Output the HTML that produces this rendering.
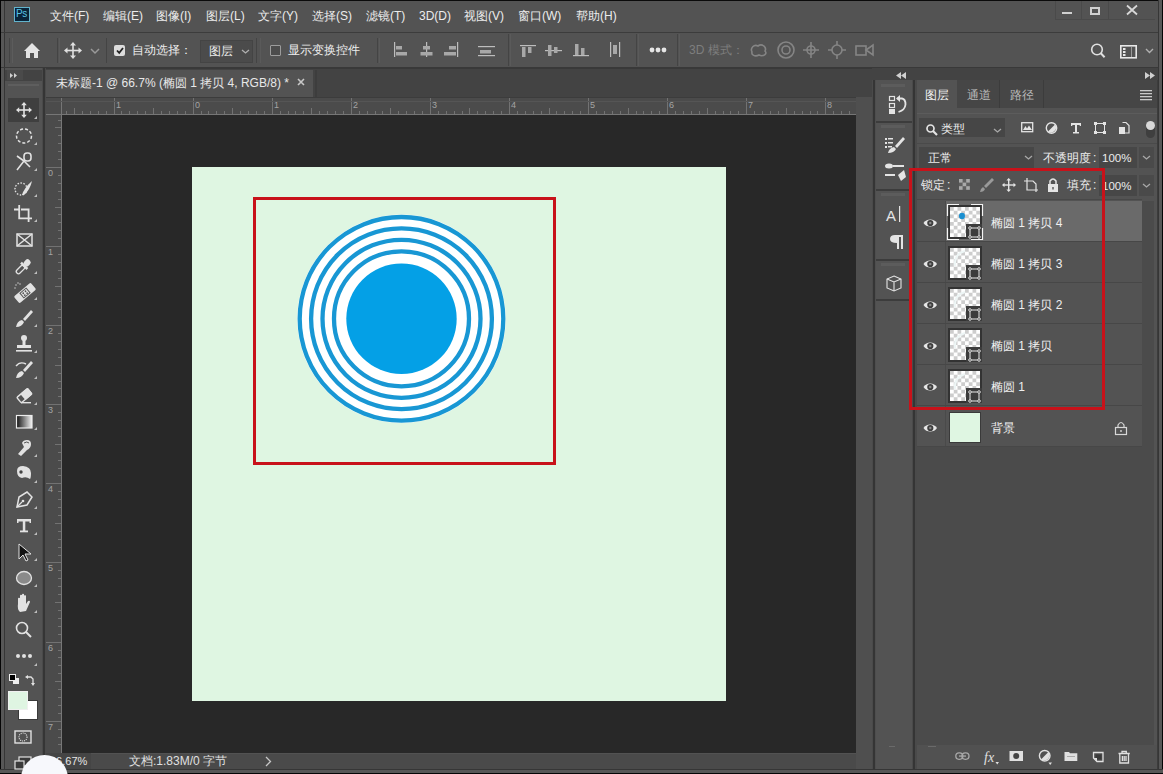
<!DOCTYPE html>
<html><head><meta charset="utf-8">
<style>
*{margin:0;padding:0;box-sizing:border-box}
html,body{width:1163px;height:774px;overflow:hidden;background:#535353;font-family:"Liberation Sans",sans-serif;color:#ececec}
.a{position:absolute}
.t{position:absolute;white-space:nowrap;font-size:12px;line-height:14px}
svg{position:absolute;overflow:visible}
.c{display:inline-block;width:1em;font-style:normal;text-align:center}
</style></head><body>
<!-- window frame -->
<div class="a" style="left:0;top:0;width:1163px;height:774px;background:#535353"></div>
<div class="a" style="left:0;top:0;width:1163px;height:1px;background:#0a0a0a"></div>
<div class="a" style="left:0;top:0;width:1px;height:774px;background:#050505"></div><div class="a" style="left:1px;top:1px;width:3px;height:67px;background:#575757"></div><div class="a" style="left:4px;top:1px;width:1px;height:67px;background:#363636"></div>
<div class="a" style="left:1158px;top:0;width:5px;height:774px;background:#575757;border-left:1px solid #363636;border-right:1px solid #050505"></div>
<div class="a" style="left:0;top:769px;width:1163px;height:5px;background:#575757;border-top:1px solid #363636;border-bottom:1px solid #050505"></div>

<!-- menu bar -->
<div class="a" style="left:14px;top:7px;width:16px;height:15px;background:#0a2439;border:1px solid #62b3cc"></div>
<div class="t" style="left:16px;top:8px;font-size:10px;line-height:12px;color:#58c4e6;letter-spacing:-0.5px">Ps</div>
<div class="t" style="left:50px;top:9px"><i class="c">文</i><i class="c">件</i>(F)</div>
<div class="t" style="left:103px;top:9px"><i class="c">编</i><i class="c">辑</i>(E)</div>
<div class="t" style="left:156px;top:9px"><i class="c">图</i><i class="c">像</i>(I)</div>
<div class="t" style="left:206px;top:9px"><i class="c">图</i><i class="c">层</i>(L)</div>
<div class="t" style="left:258px;top:9px"><i class="c">文</i><i class="c">字</i>(Y)</div>
<div class="t" style="left:312px;top:9px"><i class="c">选</i><i class="c">择</i>(S)</div>
<div class="t" style="left:366px;top:9px"><i class="c">滤</i><i class="c">镜</i>(T)</div>
<div class="t" style="left:419px;top:9px">3D(D)</div>
<div class="t" style="left:464px;top:9px"><i class="c">视</i><i class="c">图</i>(V)</div>
<div class="t" style="left:518px;top:9px"><i class="c">窗</i><i class="c">口</i>(W)</div>
<div class="t" style="left:576px;top:9px"><i class="c">帮</i><i class="c">助</i>(H)</div>
<!-- window controls -->
<div class="a" style="left:1055px;top:1px;width:1px;height:19px;background:#4a4a4a"></div>
<div class="a" style="left:1081px;top:1px;width:1px;height:19px;background:#4a4a4a"></div>
<div class="a" style="left:1108px;top:1px;width:1px;height:19px;background:#4a4a4a"></div>
<div class="a" style="left:1055px;top:19px;width:100px;height:1px;background:#4a4a4a"></div>
<div class="a" style="left:1062px;top:12px;width:10px;height:2px;background:#d0d0d0"></div>
<div class="a" style="left:1090px;top:7px;width:10px;height:8px;border:2px solid #d0d0d0"></div>
<svg style="left:1126px;top:5px" width="12" height="10"><path d="M1 0.5L11 9.5M11 0.5L1 9.5" stroke="#d8d8d8" stroke-width="1.8"/></svg>

<div class="a" style="left:1px;top:32px;width:1157px;height:1px;background:#3c3c3c"></div>

<!-- options bar -->
<div class="a" style="left:9px;top:38px;width:1px;height:25px;background:#444"></div>
<div class="a" style="left:12px;top:38px;width:1px;height:25px;background:#5c5c5c"></div>
<svg style="left:24px;top:43px" width="16" height="15"><path d="M8 0L16 8L14 8L14 15L10 15L10 10L6 10L6 15L2 15L2 8L0 8Z" fill="#e4e4e4"/></svg>
<div class="a sep" style="left:57px;top:38px;width:1px;height:25px;background:#444"></div>
<div class="a" style="left:59px;top:38px;width:1px;height:25px;background:#5a5a5a"></div>
<svg style="left:64px;top:42px" width="18" height="17"><g fill="#e0e0e0"><rect x="8.2" y="2" width="1.6" height="13"/><rect x="2" y="7.7" width="14" height="1.6"/><path d="M9 0L12 3.5L6 3.5Z"/><path d="M9 17L12 13.5L6 13.5Z"/><path d="M0 8.5L3.5 5.5L3.5 11.5Z"/><path d="M18 8.5L14.5 5.5L14.5 11.5Z"/></g></svg>
<svg style="left:90px;top:48px" width="10" height="6"><path d="M1 1L5 5L9 1" fill="none" stroke="#9a9a9a" stroke-width="1.5"/></svg>
<div class="a" style="left:106px;top:38px;width:1px;height:25px;background:#444"></div>
<div class="a" style="left:114px;top:45px;width:11px;height:11px;background:#dcdcdc;border-radius:2px"></div>
<svg style="left:116px;top:47px" width="8" height="7"><path d="M1 3.5L3.2 5.8L7 1" fill="none" stroke="#222" stroke-width="1.8"/></svg>
<div class="t" style="left:132px;top:43px"><i class="c">自</i><i class="c">动</i><i class="c">选</i><i class="c">择</i><i class="c">：</i></div>
<div class="a" style="left:200px;top:40px;width:53px;height:23px;background:#4b4b4b;border:1px solid #444"></div>
<div class="t" style="left:209px;top:44px"><i class="c">图</i><i class="c">层</i></div>
<svg style="left:241px;top:49px" width="9" height="5"><path d="M1 1L4.5 4L8 1" fill="none" stroke="#b0b0b0" stroke-width="1.3"/></svg>
<div class="a" style="left:256px;top:38px;width:1px;height:25px;background:#444"></div>
<div class="a" style="left:260px;top:38px;width:1px;height:25px;background:#5a5a5a"></div>
<div class="a" style="left:270px;top:45px;width:11px;height:11px;border:1px solid #9c9c9c;border-radius:1px;background:#4c4c4c"></div>
<div class="t" style="left:288px;top:43px"><i class="c">显</i><i class="c">示</i><i class="c">变</i><i class="c">换</i><i class="c">控</i><i class="c">件</i></div>
<div class="a" style="left:377px;top:38px;width:1px;height:25px;background:#444"></div>
<div class="a" style="left:379px;top:38px;width:1px;height:25px;background:#5a5a5a"></div>
<!-- align icons -->
<g></g>
<svg style="left:380px;top:34px" width="300" height="32"><g fill="#a8a8a8">
 <rect x="14" y="8" width="1.2" height="15" fill="#bdbdbd"/><rect x="16" y="12" width="6" height="3.5"/><rect x="16" y="18" width="11" height="3.5"/>
 <rect x="46" y="8" width="1.2" height="15" fill="#bdbdbd"/><rect x="43" y="12" width="7" height="3.5"/><rect x="40.5" y="18" width="12" height="3.5"/>
 <rect x="77" y="8" width="1.2" height="15" fill="#bdbdbd"/><rect x="69" y="12" width="7" height="3.5"/><rect x="64" y="18" width="12" height="3.5"/>
 <rect x="98" y="12" width="17" height="1.2" fill="#bdbdbd"/><rect x="100" y="16" width="11" height="3.5"/><rect x="98" y="21" width="17" height="1.2" fill="#bdbdbd"/>
 <rect x="128" y="0" width="1" height="32" fill="#444"/><rect x="130" y="0" width="1" height="32" fill="#5a5a5a"/>
 <rect x="140" y="11" width="16" height="1.2" fill="#bdbdbd"/><rect x="142" y="13" width="3.5" height="10"/><rect x="148" y="13" width="3.5" height="6"/>
 <rect x="165" y="16" width="17" height="1.2" fill="#bdbdbd"/><rect x="168" y="11" width="3.5" height="11"/><rect x="174" y="13" width="3.5" height="6"/>
 <rect x="193" y="21" width="16" height="1.2" fill="#bdbdbd"/><rect x="195" y="10" width="3.5" height="11"/><rect x="201" y="14" width="3.5" height="7"/>
 <rect x="230" y="8" width="1.2" height="15" fill="#bdbdbd"/><rect x="239" y="8" width="1.2" height="15" fill="#bdbdbd"/><rect x="233" y="11" width="4" height="9"/>
 <rect x="256" y="0" width="1" height="32" fill="#444"/><rect x="258" y="0" width="1" height="32" fill="#5a5a5a"/>
 <circle cx="272" cy="16" r="2.4" fill="#e6e6e6"/><circle cx="278" cy="16" r="2.4" fill="#e6e6e6"/><circle cx="284" cy="16" r="2.4" fill="#e6e6e6"/>
 <rect x="297" y="0" width="1" height="32" fill="#444"/><rect x="299" y="0" width="1" height="32" fill="#5a5a5a"/>
</g></svg>
<div class="t" style="left:689px;top:43px;color:#7e7e7e">3D <i class="c">模</i><i class="c">式</i><i class="c">：</i></div>
<svg style="left:748px;top:40px" width="130" height="20"><g fill="none" stroke="#858585" stroke-width="1.6">
 <path d="M4 12C2 8 6 4 10 6C14 3 19 7 17 11C20 14 15 17 11 15C7 17 3 15 4 12Z"/>
 <circle cx="38" cy="10" r="8"/><circle cx="38" cy="10" r="4"/>
 <path d="M63 2L63 18M55 10L71 10"/><circle cx="63" cy="10" r="4"/>
 <circle cx="89" cy="10" r="5"/><path d="M89 1L89 5M89 15L89 19M80 10L84 10M94 10L98 10"/>
 <rect x="108" y="6" width="10" height="9"/><path d="M118 10L125 5L125 15Z"/>
</g></svg>
<svg style="left:1090px;top:43px" width="16" height="16"><circle cx="7" cy="6.5" r="5.3" fill="none" stroke="#e0e0e0" stroke-width="1.6"/><path d="M10.8 10.3L14.6 14.2" stroke="#e0e0e0" stroke-width="2"/></svg>
<svg style="left:1120px;top:45px" width="17" height="14"><rect x="0.8" y="0.8" width="15.4" height="12" fill="none" stroke="#e8e8e8" stroke-width="1.6"/><g fill="#e8e8e8"><rect x="3" y="3" width="2.5" height="2"/><rect x="3" y="6" width="2.5" height="2"/><rect x="3" y="9" width="2.5" height="2"/></g><rect x="11" y="2" width="1" height="10" fill="#9a9a9a"/></svg>
<svg style="left:1145px;top:48px" width="9" height="6"><path d="M1 1L4.5 4.5L8 1" fill="none" stroke="#b0b0b0" stroke-width="1.4"/></svg>

<div class="a" style="left:1px;top:67px;width:1157px;height:2px;background:#393939"></div>

<!-- left dark column -->
<div class="a" style="left:1px;top:68px;width:3px;height:701px;background:#575757"></div><div class="a" style="left:4px;top:68px;width:1px;height:701px;background:#363636"></div><div class="a" style="left:5px;top:68px;width:1px;height:701px;background:#5a5a5a"></div>
<!-- tools panel -->
<div class="a" style="left:5px;top:68px;width:37px;height:701px;background:#535353"></div>
<div class="a" style="left:5px;top:70px;width:37px;height:11px;background:#434343"></div>
<div class="a" style="left:42px;top:68px;width:4px;height:701px;background:#4a4a4a"></div><div class="a" style="left:43px;top:68px;width:2px;height:701px;background:#353535"></div>

<svg style="left:0;top:0" width="50" height="774"><rect x="8" y="98" width="31" height="24" fill="#3f3f3f"/><g transform="translate(16,102)" fill="#e2e2e2"><rect x="7.2" y="2" width="1.6" height="12"/><rect x="2" y="7.2" width="12" height="1.6"/><path d="M8 0L10.8 3.2L5.2 3.2Z"/><path d="M8 16L10.8 12.8L5.2 12.8Z"/><path d="M0 8L3.2 5.2L3.2 10.8Z"/><path d="M16 8L12.8 5.2L12.8 10.8Z"/></g><path d="M37 116L37 119L34 119Z" fill="#bdbdbd"/><ellipse cx="24" cy="136" rx="7.5" ry="7" fill="none" stroke="#e2e2e2" stroke-width="1.5" stroke-dasharray="3 2"/><path d="M37 142L37 145L34 145Z" fill="#bdbdbd"/><g fill="none" stroke="#e2e2e2" stroke-width="1.6"><path d="M17 156L24 161L17 170"/><path d="M24 161L30 167"/><rect x="24" y="153" width="7" height="8" rx="3"/></g><path d="M37 168L37 171L34 171Z" fill="#bdbdbd"/><circle cx="21" cy="189" r="6" fill="none" stroke="#e2e2e2" stroke-width="1.4" stroke-dasharray="1.5 1.5"/><path d="M22 195Q24 188 32 181Q30 190 24 195Z" fill="#e2e2e2"/><path d="M37 194L37 197L34 197Z" fill="#bdbdbd"/><g fill="none" stroke="#e2e2e2" stroke-width="1.8"><path d="M14 209.5H19.5M19.2 205V218.3H32M21 209.5H28.6V222"/></g><path d="M37 219L37 222L34 222Z" fill="#bdbdbd"/><g fill="none" stroke="#e2e2e2" stroke-width="1.5"><rect x="17" y="234" width="15" height="12"/><path d="M17 234L32 246M32 234L17 246"/></g><g transform="rotate(-45 24 266)"><rect x="14" y="263.8" width="10" height="4.4" rx="2.2" fill="none" stroke="#e2e2e2" stroke-width="1.3"/><rect x="23" y="261.5" width="2.5" height="9" fill="#e2e2e2"/><rect x="25" y="263" width="7" height="6" rx="2.5" fill="#e2e2e2"/></g><path d="M37 271L37 274L34 274Z" fill="#bdbdbd"/><g transform="rotate(-40 25 293)"><rect x="14" y="288.5" width="22" height="9" rx="1.5" fill="#e2e2e2"/><rect x="20.5" y="289.5" width="9" height="7" fill="#535353"/><rect x="21.5" y="290.5" width="7" height="5" fill="#e2e2e2"/><g fill="#535353"><circle cx="23.5" cy="292" r="0.9"/><circle cx="26.5" cy="292" r="0.9"/><circle cx="23.5" cy="294.5" r="0.9"/><circle cx="26.5" cy="294.5" r="0.9"/></g></g><g fill="#d8d8d8"><circle cx="16" cy="285" r="0.7"/><circle cx="18" cy="283" r="0.7"/><circle cx="20" cy="284" r="0.7"/><circle cx="15" cy="288" r="0.7"/></g><path d="M37 297L37 300L34 300Z" fill="#bdbdbd"/><path d="M31 310L33 312L25 321L23 319Z" fill="#e2e2e2"/><path d="M22 320Q17 321 16 327Q22 327 24 322Z" fill="#e2e2e2"/><path d="M37 324L37 327L34 327Z" fill="#bdbdbd"/><g fill="#e2e2e2"><circle cx="24" cy="338" r="3"/><rect x="22.5" y="340" width="3" height="5"/><rect x="17" y="345" width="14" height="3"/><rect x="16" y="350" width="16" height="1.6"/></g><path d="M37 350L37 353L34 353Z" fill="#bdbdbd"/><path d="M31 361L33 363L25 372L23 370Z" fill="#e2e2e2"/><path d="M22 371Q17 372 16 378Q22 378 24 373Z" fill="#e2e2e2"/><path d="M16 366Q20 361 26 364" fill="none" stroke="#e2e2e2" stroke-width="1.4"/><path d="M37 376L37 379L34 379Z" fill="#bdbdbd"/><g transform="rotate(-40 24 396)"><rect x="17.5" y="392.5" width="14" height="7" rx="1" fill="none" stroke="#e2e2e2" stroke-width="1.4"/><rect x="22.5" y="392" width="9.5" height="8" rx="1" fill="#e2e2e2"/></g><rect x="21" y="402" width="10" height="1.4" fill="#e2e2e2"/><path d="M37 402L37 405L34 405Z" fill="#bdbdbd"/><defs><linearGradient id="gr" x1="0" y1="0" x2="1" y2="0"><stop offset="0" stop-color="#111"/><stop offset="1" stop-color="#f4f4f4"/></linearGradient></defs><rect x="16.5" y="415.5" width="15.5" height="12.5" fill="url(#gr)" stroke="#ececec" stroke-width="1.2"/><path d="M37 427L37 430L34 430Z" fill="#bdbdbd"/><path d="M18 454L24 447L22 443Q23 440 27 440Q31 440 31 444Q31 448 27 450L21 456Z" fill="#e2e2e2"/><path d="M24 443Q27 441 29 443" fill="none" stroke="#535353" stroke-width="1"/><path d="M37 454L37 457L34 457Z" fill="#bdbdbd"/><path d="M17 471Q17 466 23 466Q31 467 31 473Q31 478 30 479Q26 476 22 478Q17 477 17 471Z" fill="#e2e2e2"/><circle cx="21" cy="472" r="1.7" fill="#444"/><path d="M37 480L37 483L34 483Z" fill="#bdbdbd"/><path d="M17 507L19 497L27 492L32 497L27 505Z" fill="none" stroke="#e2e2e2" stroke-width="1.5"/><circle cx="23" cy="501" r="1.3" fill="#e2e2e2"/><path d="M17 507L22 502" stroke="#e2e2e2" stroke-width="1.2"/><path d="M37 506L37 509L34 509Z" fill="#bdbdbd"/><g fill="#e2e2e2"><rect x="17" y="519" width="14" height="2.5"/><rect x="22.8" y="519" width="2.5" height="13"/><rect x="20" y="530.5" width="8" height="1.8"/><rect x="17" y="519" width="1.5" height="4"/><rect x="29.5" y="519" width="1.5" height="4"/></g><path d="M37 532L37 535L34 535Z" fill="#bdbdbd"/><path d="M19 544L19 559L23 555L26 561L28 560L25 554L31 554Z" fill="#111" stroke="#e2e2e2" stroke-width="1"/><path d="M37 558L37 561L34 561Z" fill="#bdbdbd"/><ellipse cx="24" cy="578" rx="7.5" ry="6.5" fill="#8a8a8a" stroke="#e2e2e2" stroke-width="1.3"/><path d="M37 584L37 587L34 587Z" fill="#bdbdbd"/><path d="M18 604L18 599Q18 597 20 598L20 603L20 596Q20 594 22 595L22 602L22 595Q22 593 24 594L24 602L24 596Q25 594 26 596L26 604L28 601Q30 600 30 602L26 611L20 612Q17 609 18 604Z" fill="#e2e2e2"/><path d="M37 610L37 613L34 613Z" fill="#bdbdbd"/><circle cx="22" cy="628" r="5.5" fill="none" stroke="#e2e2e2" stroke-width="1.6"/><path d="M26 632L31 637" stroke="#e2e2e2" stroke-width="2"/><g fill="#e2e2e2"><circle cx="18" cy="656" r="2"/><circle cx="24" cy="656" r="2"/><circle cx="30" cy="656" r="2"/></g><path d="M37 663L37 666L34 666Z" fill="#bdbdbd"/><rect x="13" y="678" width="6" height="6" fill="#eee"/><rect x="9.5" y="674.5" width="6" height="6" fill="#000" stroke="#eee" stroke-width="1"/><path d="M27 677L31 677L33 679L33 684" fill="none" stroke="#e2e2e2" stroke-width="1.3"/><path d="M25 677L28 675L28 679Z" fill="#e2e2e2"/><path d="M33 686L31 683L35 683Z" fill="#e2e2e2"/><rect x="18.5" y="700.5" width="19" height="19" fill="#ffffff" stroke="#3a3a3a" stroke-width="1"/><rect x="8.5" y="691.5" width="19" height="18" fill="#dff5e2" stroke="#f0f0f0" stroke-width="1"/><rect x="15" y="731" width="16" height="12" fill="none" stroke="#e2e2e2" stroke-width="1.4"/><circle cx="23" cy="737" r="4" fill="none" stroke="#e2e2e2" stroke-width="1.2" stroke-dasharray="1 1"/><rect x="19" y="757" width="12" height="9" fill="#3a3a3a" stroke="#e2e2e2" stroke-width="1.2"/><rect x="15" y="761" width="9" height="8" fill="#3a3a3a" stroke="#e2e2e2" stroke-width="1.2"/></svg>
<div class="a" style="left:7px;top:70px;width:16px;height:10px;background:#4a4a4a"></div>
<svg style="left:9px;top:72px" width="10" height="7"><path d="M1 1L4 3.5L1 6ZM5 1L8 3.5L5 6Z" fill="#d0d0d0"/></svg>
<div class="a" style="left:8px;top:84px;width:31px;height:2px;background:#5e5e5e"></div>
<!-- tab bar -->
<div class="a" style="left:46px;top:69px;width:826px;height:28px;background:#434343"></div>
<div class="a" style="left:46px;top:70px;width:267px;height:27px;background:#535353"></div>
<div class="a" style="left:315px;top:70px;width:2px;height:27px;background:#3d3d3d"></div>

<!-- rulers -->
<div class="a" style="left:46px;top:97px;width:810px;height:18px;background:#4b4b4b"></div>
<div class="a" style="left:46px;top:97px;width:16px;height:656px;background:#4b4b4b"></div>
<div class="a" style="left:46px;top:97px;width:826px;height:1px;background:#3c3c3c"></div>

<div class="t" style="left:56px;top:76px;color:#e8e8e8"><i class="c">未</i><i class="c">标</i><i class="c">题</i>-1 @ 66.7% (<i class="c">椭</i><i class="c">圆</i> 1 <i class="c">拷</i><i class="c">贝</i> 4, RGB/8) *</div>
<svg style="left:297px;top:78px" width="8" height="8"><path d="M1 1L7 7M7 1L1 7" stroke="#c8c8c8" stroke-width="1.6"/></svg>
<svg style="left:0;top:0" width="1163" height="774"><g fill="#727272"><rect x="66" y="111" width="1" height="3"/><rect x="74" y="108" width="1" height="6"/><rect x="82" y="111" width="1" height="3"/><rect x="90" y="111" width="1" height="3"/><rect x="98" y="111" width="1" height="3"/><rect x="106" y="111" width="1" height="3"/><rect x="114" y="98" width="1" height="16"/><rect x="121" y="111" width="1" height="3"/><rect x="129" y="111" width="1" height="3"/><rect x="137" y="111" width="1" height="3"/><rect x="145" y="111" width="1" height="3"/><rect x="153" y="108" width="1" height="6"/><rect x="161" y="111" width="1" height="3"/><rect x="169" y="111" width="1" height="3"/><rect x="177" y="111" width="1" height="3"/><rect x="185" y="111" width="1" height="3"/><rect x="193" y="98" width="1" height="16"/><rect x="201" y="111" width="1" height="3"/><rect x="208" y="111" width="1" height="3"/><rect x="216" y="111" width="1" height="3"/><rect x="224" y="111" width="1" height="3"/><rect x="232" y="108" width="1" height="6"/><rect x="240" y="111" width="1" height="3"/><rect x="248" y="111" width="1" height="3"/><rect x="256" y="111" width="1" height="3"/><rect x="264" y="111" width="1" height="3"/><rect x="272" y="98" width="1" height="16"/><rect x="280" y="111" width="1" height="3"/><rect x="288" y="111" width="1" height="3"/><rect x="295" y="111" width="1" height="3"/><rect x="303" y="111" width="1" height="3"/><rect x="311" y="108" width="1" height="6"/><rect x="319" y="111" width="1" height="3"/><rect x="327" y="111" width="1" height="3"/><rect x="335" y="111" width="1" height="3"/><rect x="343" y="111" width="1" height="3"/><rect x="351" y="98" width="1" height="16"/><rect x="359" y="111" width="1" height="3"/><rect x="367" y="111" width="1" height="3"/><rect x="375" y="111" width="1" height="3"/><rect x="382" y="111" width="1" height="3"/><rect x="390" y="108" width="1" height="6"/><rect x="398" y="111" width="1" height="3"/><rect x="406" y="111" width="1" height="3"/><rect x="414" y="111" width="1" height="3"/><rect x="422" y="111" width="1" height="3"/><rect x="430" y="98" width="1" height="16"/><rect x="438" y="111" width="1" height="3"/><rect x="446" y="111" width="1" height="3"/><rect x="454" y="111" width="1" height="3"/><rect x="462" y="111" width="1" height="3"/><rect x="469" y="108" width="1" height="6"/><rect x="477" y="111" width="1" height="3"/><rect x="485" y="111" width="1" height="3"/><rect x="493" y="111" width="1" height="3"/><rect x="501" y="111" width="1" height="3"/><rect x="509" y="98" width="1" height="16"/><rect x="517" y="111" width="1" height="3"/><rect x="525" y="111" width="1" height="3"/><rect x="533" y="111" width="1" height="3"/><rect x="541" y="111" width="1" height="3"/><rect x="549" y="108" width="1" height="6"/><rect x="556" y="111" width="1" height="3"/><rect x="564" y="111" width="1" height="3"/><rect x="572" y="111" width="1" height="3"/><rect x="580" y="111" width="1" height="3"/><rect x="588" y="98" width="1" height="16"/><rect x="596" y="111" width="1" height="3"/><rect x="604" y="111" width="1" height="3"/><rect x="612" y="111" width="1" height="3"/><rect x="620" y="111" width="1" height="3"/><rect x="628" y="108" width="1" height="6"/><rect x="636" y="111" width="1" height="3"/><rect x="643" y="111" width="1" height="3"/><rect x="651" y="111" width="1" height="3"/><rect x="659" y="111" width="1" height="3"/><rect x="667" y="98" width="1" height="16"/><rect x="675" y="111" width="1" height="3"/><rect x="683" y="111" width="1" height="3"/><rect x="691" y="111" width="1" height="3"/><rect x="699" y="111" width="1" height="3"/><rect x="707" y="108" width="1" height="6"/><rect x="715" y="111" width="1" height="3"/><rect x="723" y="111" width="1" height="3"/><rect x="730" y="111" width="1" height="3"/><rect x="738" y="111" width="1" height="3"/><rect x="746" y="98" width="1" height="16"/><rect x="754" y="111" width="1" height="3"/><rect x="762" y="111" width="1" height="3"/><rect x="770" y="111" width="1" height="3"/><rect x="778" y="111" width="1" height="3"/><rect x="786" y="108" width="1" height="6"/><rect x="794" y="111" width="1" height="3"/><rect x="802" y="111" width="1" height="3"/><rect x="810" y="111" width="1" height="3"/><rect x="817" y="111" width="1" height="3"/><rect x="825" y="98" width="1" height="16"/><rect x="833" y="111" width="1" height="3"/><rect x="841" y="111" width="1" height="3"/><rect x="849" y="111" width="1" height="3"/><rect x="58" y="120" width="3" height="1"/><rect x="55" y="127" width="6" height="1"/><rect x="58" y="135" width="3" height="1"/><rect x="58" y="143" width="3" height="1"/><rect x="58" y="151" width="3" height="1"/><rect x="58" y="159" width="3" height="1"/><rect x="46" y="167" width="15" height="1"/><rect x="58" y="175" width="3" height="1"/><rect x="58" y="183" width="3" height="1"/><rect x="58" y="191" width="3" height="1"/><rect x="58" y="199" width="3" height="1"/><rect x="55" y="207" width="6" height="1"/><rect x="58" y="214" width="3" height="1"/><rect x="58" y="222" width="3" height="1"/><rect x="58" y="230" width="3" height="1"/><rect x="58" y="238" width="3" height="1"/><rect x="46" y="246" width="15" height="1"/><rect x="58" y="254" width="3" height="1"/><rect x="58" y="262" width="3" height="1"/><rect x="58" y="270" width="3" height="1"/><rect x="58" y="278" width="3" height="1"/><rect x="55" y="286" width="6" height="1"/><rect x="58" y="294" width="3" height="1"/><rect x="58" y="301" width="3" height="1"/><rect x="58" y="309" width="3" height="1"/><rect x="58" y="317" width="3" height="1"/><rect x="46" y="325" width="15" height="1"/><rect x="58" y="333" width="3" height="1"/><rect x="58" y="341" width="3" height="1"/><rect x="58" y="349" width="3" height="1"/><rect x="58" y="357" width="3" height="1"/><rect x="55" y="365" width="6" height="1"/><rect x="58" y="373" width="3" height="1"/><rect x="58" y="381" width="3" height="1"/><rect x="58" y="388" width="3" height="1"/><rect x="58" y="396" width="3" height="1"/><rect x="46" y="404" width="15" height="1"/><rect x="58" y="412" width="3" height="1"/><rect x="58" y="420" width="3" height="1"/><rect x="58" y="428" width="3" height="1"/><rect x="58" y="436" width="3" height="1"/><rect x="55" y="444" width="6" height="1"/><rect x="58" y="452" width="3" height="1"/><rect x="58" y="460" width="3" height="1"/><rect x="58" y="468" width="3" height="1"/><rect x="58" y="475" width="3" height="1"/><rect x="46" y="483" width="15" height="1"/><rect x="58" y="491" width="3" height="1"/><rect x="58" y="499" width="3" height="1"/><rect x="58" y="507" width="3" height="1"/><rect x="58" y="515" width="3" height="1"/><rect x="55" y="523" width="6" height="1"/><rect x="58" y="531" width="3" height="1"/><rect x="58" y="539" width="3" height="1"/><rect x="58" y="547" width="3" height="1"/><rect x="58" y="555" width="3" height="1"/><rect x="46" y="562" width="15" height="1"/><rect x="58" y="570" width="3" height="1"/><rect x="58" y="578" width="3" height="1"/><rect x="58" y="586" width="3" height="1"/><rect x="58" y="594" width="3" height="1"/><rect x="55" y="602" width="6" height="1"/><rect x="58" y="610" width="3" height="1"/><rect x="58" y="618" width="3" height="1"/><rect x="58" y="626" width="3" height="1"/><rect x="58" y="634" width="3" height="1"/><rect x="46" y="642" width="15" height="1"/><rect x="58" y="650" width="3" height="1"/><rect x="58" y="657" width="3" height="1"/><rect x="58" y="665" width="3" height="1"/><rect x="58" y="673" width="3" height="1"/><rect x="55" y="681" width="6" height="1"/><rect x="58" y="689" width="3" height="1"/><rect x="58" y="697" width="3" height="1"/><rect x="58" y="705" width="3" height="1"/><rect x="58" y="713" width="3" height="1"/><rect x="46" y="721" width="15" height="1"/><rect x="58" y="729" width="3" height="1"/><rect x="58" y="737" width="3" height="1"/><rect x="58" y="744" width="3" height="1"/><rect x="46" y="114" width="810" height="1" fill="#767676"/><rect x="61" y="98" width="1" height="655" fill="#767676"/><rect x="46" y="101" width="810" height="1" fill="#555"/></g></svg>
<div class="t" style="left:116px;top:100px;font-size:9px;line-height:11px;color:#a4a4a4">1</div>
<div class="t" style="left:195px;top:100px;font-size:9px;line-height:11px;color:#a4a4a4">0</div>
<div class="t" style="left:274px;top:100px;font-size:9px;line-height:11px;color:#a4a4a4">1</div>
<div class="t" style="left:353px;top:100px;font-size:9px;line-height:11px;color:#a4a4a4">2</div>
<div class="t" style="left:432px;top:100px;font-size:9px;line-height:11px;color:#a4a4a4">3</div>
<div class="t" style="left:511px;top:100px;font-size:9px;line-height:11px;color:#a4a4a4">4</div>
<div class="t" style="left:590px;top:100px;font-size:9px;line-height:11px;color:#a4a4a4">5</div>
<div class="t" style="left:669px;top:100px;font-size:9px;line-height:11px;color:#a4a4a4">6</div>
<div class="t" style="left:748px;top:100px;font-size:9px;line-height:11px;color:#a4a4a4">7</div>
<div class="t" style="left:827px;top:100px;font-size:9px;line-height:11px;color:#a4a4a4">8</div>
<div class="t" style="left:48px;top:168px;font-size:9px;line-height:11px;color:#a4a4a4">0</div>
<div class="t" style="left:48px;top:247px;font-size:9px;line-height:11px;color:#a4a4a4">1</div>
<div class="t" style="left:48px;top:326px;font-size:9px;line-height:11px;color:#a4a4a4">2</div>
<div class="t" style="left:48px;top:405px;font-size:9px;line-height:11px;color:#a4a4a4">3</div>
<div class="t" style="left:48px;top:484px;font-size:9px;line-height:11px;color:#a4a4a4">4</div>
<div class="t" style="left:48px;top:563px;font-size:9px;line-height:11px;color:#a4a4a4">5</div>
<div class="t" style="left:48px;top:643px;font-size:9px;line-height:11px;color:#a4a4a4">6</div>
<div class="t" style="left:48px;top:722px;font-size:9px;line-height:11px;color:#a4a4a4">7</div>
<!-- canvas -->
<div class="a" style="left:62px;top:115px;width:794px;height:638px;background:#282828"></div>
<!-- document -->
<div class="a" style="left:192px;top:167px;width:534px;height:534px;background:#dff6e2"></div>
<svg width="1163" height="774" style="left:0;top:0">
  <circle cx="401.5" cy="318.8" r="104.2" fill="#fff"/>
  <g fill="none" stroke="#1897d4" stroke-width="4.3">
    <circle cx="401.5" cy="318.8" r="101.8"/>
    <circle cx="401.5" cy="318.8" r="90.4"/>
    <circle cx="401.5" cy="318.8" r="79"/>
    <circle cx="401.5" cy="318.8" r="67.5"/>
  </g>
  <circle cx="401.5" cy="318.8" r="55.2" fill="#04a0e6"/>
</svg>
<div class="a" style="left:253px;top:197px;width:303px;height:268px;border:3px solid #c8121a"></div>

<!-- status bar -->
<div class="a" style="left:46px;top:753px;width:810px;height:16px;background:#4a4a4a;border-top:1px solid #525252"></div>
<div class="a" style="left:46px;top:753px;width:45px;height:16px;background:#454545"></div>
<div class="t" style="left:50px;top:754px;font-size:11px;line-height:14px;color:#e6e6e6">66.67%</div>
<div class="t" style="left:129px;top:754px;color:#e0e0e0"><i class="c">文</i><i class="c">档</i>:1.83M/0 <i class="c">字</i><i class="c">节</i></div>
<svg style="left:265px;top:756px" width="7" height="11"><path d="M1 1L5.5 5.5L1 10" fill="none" stroke="#c8c8c8" stroke-width="1.3"/></svg>

<!-- v scrollbar column -->
<div class="a" style="left:856px;top:97px;width:16px;height:672px;background:#4f4f4f"></div>

<!-- right dock -->
<div class="a" style="left:872px;top:68px;width:286px;height:12px;background:#434343"></div>
<svg style="left:896px;top:72px" width="11" height="7"><path d="M5 0L0 3.5L5 7ZM10 0L5 3.5L10 7Z" fill="#d0d0d0"/></svg>
<svg style="left:1145px;top:72px" width="11" height="7"><path d="M0 0L5 3.5L0 7ZM5 0L10 3.5L5 7Z" fill="#d0d0d0"/></svg>
<div class="a" style="left:872px;top:80px;width:4px;height:689px;background:#4a4a4a;border-left:1px solid #4a4a4a;border-right:1px solid #4e4e4e"></div><div class="a" style="left:873px;top:80px;width:2px;height:689px;background:#353535"></div>
<div class="a" style="left:876px;top:80px;width:36px;height:689px;background:#535353"></div>
<div class="a" style="left:876px;top:121px;width:36px;height:2px;background:#3c3c3c"></div>
<div class="a" style="left:876px;top:189px;width:36px;height:2px;background:#3c3c3c"></div>
<div class="a" style="left:876px;top:259px;width:36px;height:2px;background:#3c3c3c"></div>
<div class="a" style="left:876px;top:299px;width:36px;height:2px;background:#3c3c3c"></div>
<div class="a" style="left:881px;top:84px;width:24px;height:3px;background:#5c5c5c"></div>
<div class="a" style="left:881px;top:125px;width:24px;height:3px;background:#5c5c5c"></div>
<div class="a" style="left:881px;top:193px;width:24px;height:3px;background:#5c5c5c"></div>
<div class="a" style="left:881px;top:263px;width:24px;height:3px;background:#5c5c5c"></div>
<svg style="left:0;top:0" width="1163" height="774"><g fill="none" stroke="#e4e4e4" stroke-width="1.2"><rect x="889.5" y="96.5" width="5" height="4"/><rect x="889.5" y="103.5" width="5" height="4"/></g><rect x="889" y="109" width="6" height="5" fill="#e4e4e4"/><path d="M897.5 98.5L902 98.5Q905.5 99 905.5 104.5Q905 110 898.5 112" fill="none" stroke="#e4e4e4" stroke-width="1.8"/><path d="M896 98.5L900 95L900 102Z" fill="#e4e4e4"/><g fill="#e4e4e4"><rect x="885" y="138" width="2" height="2"/><rect x="888" y="138" width="5" height="1.5"/><rect x="885" y="142" width="2" height="2"/><rect x="888" y="142" width="5" height="1.5"/><rect x="885" y="146" width="2" height="2"/><rect x="888" y="146" width="4" height="1.5"/></g><path d="M903 137L905 139L897 148L895 146Z" fill="#e4e4e4"/><path d="M894 147Q889 148 888 153Q894 153 896 149Z" fill="#e4e4e4"/><g fill="#e4e4e4"><ellipse cx="889" cy="166" rx="4" ry="2.5"/><rect x="893" y="165" width="11" height="2"/><rect x="885" y="174" width="10" height="2"/><path d="M898 175L904 170L906 177L901 181Z"/></g><text x="886" y="221" font-family="Liberation Sans" font-size="15" fill="#e4e4e4">A</text><rect x="899" y="206" width="1.2" height="16" fill="#e4e4e4"/><path d="M895 235L903 235L903 249L901 249L901 237L899 237L899 249L897 249L897 243Q890 243 890 239Q890 235 895 235Z" fill="#e4e4e4"/><g fill="none" stroke="#e4e4e4" stroke-width="1.1"><path d="M894 276L901 279L901 288L894 291L887 288L887 279Z"/><path d="M887 279L894 282L901 279M894 282L894 291"/></g></svg>
<div class="a" style="left:912px;top:80px;width:5px;height:689px;background:#4a4a4a"></div><div class="a" style="left:913px;top:80px;width:2px;height:689px;background:#353535"></div>
<div class="a" style="left:917px;top:80px;width:241px;height:689px;background:#535353"></div>
<div class="a" style="left:957px;top:80px;width:201px;height:28px;background:#464646"></div>
<div class="a" style="left:999px;top:80px;width:1px;height:28px;background:#3c3c3c"></div>
<div class="a" style="left:1043px;top:80px;width:1px;height:28px;background:#3c3c3c"></div>
<div class="t" style="left:925px;top:88px;color:#f2f2f2"><i class="c">图</i><i class="c">层</i></div>
<div class="t" style="left:967px;top:88px;color:#b8b8b8"><i class="c">通</i><i class="c">道</i></div>
<div class="t" style="left:1010px;top:88px;color:#b8b8b8"><i class="c">路</i><i class="c">径</i></div>
<svg style="left:1140px;top:90px" width="12" height="10"><g fill="#c8c8c8"><rect x="0" y="0" width="12" height="1.3"/><rect x="0" y="3" width="12" height="1.3"/><rect x="0" y="6" width="12" height="1.3"/><rect x="0" y="9" width="12" height="1.3"/></g></svg>
<div class="a" style="left:1142px;top:201px;width:12px;height:545px;background:#4b4b4b"></div><div class="a" style="left:917px;top:447px;width:225px;height:298px;background:#4b4b4b"></div><div class="a" style="left:917px;top:745px;width:240px;height:24px;background:#515151"></div>
<div class="a" style="left:1157px;top:80px;width:1px;height:689px;background:#3c3c3c"></div>
<div class="a" style="left:917px;top:113px;width:240px;height:1px;background:#5c5c5c"></div>
<div class="a" style="left:919px;top:118px;width:86px;height:19px;background:#464646"></div>
<svg style="left:926px;top:124px" width="12" height="12"><circle cx="4.5" cy="4.5" r="3.5" fill="none" stroke="#e4e4e4" stroke-width="1.7"/><path d="M7 7L11 11" stroke="#e4e4e4" stroke-width="2.2"/></svg>
<div class="t" style="left:941px;top:122px"><i class="c">类</i><i class="c">型</i></div>
<svg style="left:993px;top:128px" width="9" height="5"><path d="M1 1L4.5 4L8 1" fill="none" stroke="#a8a8a8" stroke-width="1.3"/></svg>
<svg style="left:0;top:0" width="1163" height="774"><rect x="1021.7" y="122.7" width="11" height="9" fill="none" stroke="#e4e4e4" stroke-width="1.3"/><path d="M1023 130L1025.5 126L1027 128.5L1029 125.5L1032 130Z" fill="#e4e4e4"/><circle cx="1051.5" cy="128" r="5.2" fill="none" stroke="#e4e4e4" stroke-width="1.4"/><path d="M1055 124.5A5 5 0 0 1 1048 131.5Z" fill="#e4e4e4"/><g fill="#e4e4e4"><rect x="1071" y="123" width="10" height="2"/><rect x="1075" y="123" width="2" height="10"/><rect x="1073" y="132" width="6" height="1.5"/><rect x="1071" y="123" width="1.3" height="3"/><rect x="1079.7" y="123" width="1.3" height="3"/></g><rect x="1095.5" y="123.5" width="9" height="9" fill="none" stroke="#e4e4e4" stroke-width="1"/><g fill="#e4e4e4"><rect x="1094" y="122" width="3" height="3"/><rect x="1103" y="122" width="3" height="3"/><rect x="1094" y="131" width="3" height="3"/><rect x="1103" y="131" width="3" height="3"/></g><path d="M1122.5 122.5L1126 122.5L1129 125.5L1129 133L1124 133" fill="none" stroke="#e4e4e4" stroke-width="1.2"/><rect x="1119" y="127" width="6" height="7" fill="#e4e4e4"/><rect x="1146" y="121" width="9" height="17" rx="4.5" fill="#3f3f3f"/><circle cx="1150.5" cy="125.5" r="4.5" fill="#d8d8d8"/></svg>
<div class="a" style="left:917px;top:143px;width:240px;height:1px;background:#4a4a4a"></div>
<div class="a" style="left:919px;top:147px;width:115px;height:21px;background:#474747"></div>
<div class="t" style="left:928px;top:151px"><i class="c">正</i><i class="c">常</i></div>
<svg style="left:1024px;top:155px" width="9" height="5"><path d="M1 1L4.5 4L8 1" fill="none" stroke="#a8a8a8" stroke-width="1.3"/></svg>
<div class="t" style="left:1043px;top:151px"><i class="c">不</i><i class="c">透</i><i class="c">明</i><i class="c">度</i><span style="margin-left:2px">:</span></div>
<div class="a" style="left:1099px;top:147px;width:38px;height:21px;background:#474747"></div>
<div class="t" style="left:1102px;top:151px;font-size:11.5px">100%</div>
<div class="a" style="left:1139px;top:147px;width:15px;height:21px;background:#4a4a4a"></div>
<svg style="left:1142px;top:155px" width="9" height="5"><path d="M1 1L4.5 4L8 1" fill="none" stroke="#a8a8a8" stroke-width="1.3"/></svg>
<div class="t" style="left:921px;top:178px"><i class="c">锁</i><i class="c">定</i><span style="margin-left:2px">:</span></div>
<svg style="left:0;top:0" width="1163" height="774"><g fill="#a8a8a8"><rect x="959" y="179" width="11" height="11" fill="#5e5e5e"/><rect x="959" y="179" width="3.6" height="3.6"/><rect x="966.2" y="179" width="3.6" height="3.6"/><rect x="962.6" y="182.6" width="3.6" height="3.6"/><rect x="959" y="186.2" width="3.6" height="3.6"/><rect x="966.2" y="186.2" width="3.6" height="3.6"/></g><path d="M992 178L994 180L986 188L984 186Z" fill="#9a9a9a"/><path d="M983 187Q980 189 980 192Q984 192 985 189Z" fill="#9a9a9a"/><g transform="translate(1002,178)" fill="#e4e4e4"><rect x="6" y="2" width="1.4" height="10"/><rect x="2" y="6.3" width="10" height="1.4"/><path d="M6.7 0L9 2.5L4.4 2.5Z"/><path d="M6.7 14L9 11.5L4.4 11.5Z"/><path d="M0 7L2.5 4.7L2.5 9.3Z"/><path d="M14 7L11.5 4.7L11.5 9.3Z"/></g><path d="M1027 178L1027 190L1038 190M1024 181L1033 181L1036 184L1036 192" fill="none" stroke="#e4e4e4" stroke-width="1.2"/><rect x="1048" y="184" width="10" height="8" fill="#e4e4e4"/><path d="M1050 184L1050 181Q1053 177 1056 181L1056 184" fill="none" stroke="#e4e4e4" stroke-width="1.5"/><rect x="1052.3" y="187" width="1.4" height="2.5" fill="#535353"/></svg>
<div class="t" style="left:1067px;top:178px"><i class="c">填</i><i class="c">充</i><span style="margin-left:2px">:</span></div>
<div class="a" style="left:1099px;top:175px;width:38px;height:21px;background:#474747"></div>
<div class="t" style="left:1102px;top:179px;font-size:11.5px">100%</div>
<div class="a" style="left:1139px;top:175px;width:15px;height:21px;background:#4a4a4a"></div>
<svg style="left:1142px;top:183px" width="9" height="5"><path d="M1 1L4.5 4L8 1" fill="none" stroke="#a8a8a8" stroke-width="1.3"/></svg>
<div class="a" style="left:917px;top:199px;width:225px;height:1px;background:#484848"></div>
<div class="a" style="left:917px;top:201px;width:225px;height:40px;background:#535353"></div><div class="a" style="left:945px;top:201px;width:197px;height:40px;background:#6a6a6a"></div>
<div class="a" style="left:917px;top:241px;width:225px;height:1px;background:#474747"></div>
<div class="a" style="left:945px;top:201px;width:1px;height:40px;background:#4a4a4a"></div>
<svg style="left:922px;top:218px" width="16" height="10"><path d="M1.5 5C4 0.3 12.5 0.3 15 5C12.5 9.7 4 9.7 1.5 5Z" fill="#e8e8e8"/><circle cx="8.3" cy="5" r="3.1" fill="#3e3e3e"/><circle cx="8.3" cy="5" r="1.2" fill="#8a8a8a"/></svg>
<div class="t" style="left:991px;top:216px;color:#f0f0f0"><i class="c">椭</i><i class="c">圆</i> 1 <i class="c">拷</i><i class="c">贝</i> 4</div>
<div class="a" style="left:917px;top:242px;width:225px;height:40px;background:#535353"></div>
<div class="a" style="left:917px;top:282px;width:225px;height:1px;background:#474747"></div>
<div class="a" style="left:945px;top:242px;width:1px;height:40px;background:#4a4a4a"></div>
<svg style="left:922px;top:259px" width="16" height="10"><path d="M1.5 5C4 0.3 12.5 0.3 15 5C12.5 9.7 4 9.7 1.5 5Z" fill="#e8e8e8"/><circle cx="8.3" cy="5" r="3.1" fill="#3e3e3e"/><circle cx="8.3" cy="5" r="1.2" fill="#8a8a8a"/></svg>
<div class="t" style="left:991px;top:257px;color:#f0f0f0"><i class="c">椭</i><i class="c">圆</i> 1 <i class="c">拷</i><i class="c">贝</i> 3</div>
<div class="a" style="left:917px;top:283px;width:225px;height:40px;background:#535353"></div>
<div class="a" style="left:917px;top:323px;width:225px;height:1px;background:#474747"></div>
<div class="a" style="left:945px;top:283px;width:1px;height:40px;background:#4a4a4a"></div>
<svg style="left:922px;top:300px" width="16" height="10"><path d="M1.5 5C4 0.3 12.5 0.3 15 5C12.5 9.7 4 9.7 1.5 5Z" fill="#e8e8e8"/><circle cx="8.3" cy="5" r="3.1" fill="#3e3e3e"/><circle cx="8.3" cy="5" r="1.2" fill="#8a8a8a"/></svg>
<div class="t" style="left:991px;top:298px;color:#f0f0f0"><i class="c">椭</i><i class="c">圆</i> 1 <i class="c">拷</i><i class="c">贝</i> 2</div>
<div class="a" style="left:917px;top:324px;width:225px;height:40px;background:#535353"></div>
<div class="a" style="left:917px;top:364px;width:225px;height:1px;background:#474747"></div>
<div class="a" style="left:945px;top:324px;width:1px;height:40px;background:#4a4a4a"></div>
<svg style="left:922px;top:341px" width="16" height="10"><path d="M1.5 5C4 0.3 12.5 0.3 15 5C12.5 9.7 4 9.7 1.5 5Z" fill="#e8e8e8"/><circle cx="8.3" cy="5" r="3.1" fill="#3e3e3e"/><circle cx="8.3" cy="5" r="1.2" fill="#8a8a8a"/></svg>
<div class="t" style="left:991px;top:339px;color:#f0f0f0"><i class="c">椭</i><i class="c">圆</i> 1 <i class="c">拷</i><i class="c">贝</i></div>
<div class="a" style="left:917px;top:365px;width:225px;height:40px;background:#535353"></div>
<div class="a" style="left:917px;top:405px;width:225px;height:1px;background:#474747"></div>
<div class="a" style="left:945px;top:365px;width:1px;height:40px;background:#4a4a4a"></div>
<svg style="left:922px;top:382px" width="16" height="10"><path d="M1.5 5C4 0.3 12.5 0.3 15 5C12.5 9.7 4 9.7 1.5 5Z" fill="#e8e8e8"/><circle cx="8.3" cy="5" r="3.1" fill="#3e3e3e"/><circle cx="8.3" cy="5" r="1.2" fill="#8a8a8a"/></svg>
<div class="t" style="left:991px;top:380px;color:#f0f0f0"><i class="c">椭</i><i class="c">圆</i> 1</div>
<div class="a" style="left:917px;top:406px;width:225px;height:40px;background:#535353"></div>
<div class="a" style="left:917px;top:446px;width:225px;height:1px;background:#474747"></div>
<div class="a" style="left:945px;top:406px;width:1px;height:40px;background:#4a4a4a"></div>
<svg style="left:922px;top:423px" width="16" height="10"><path d="M1.5 5C4 0.3 12.5 0.3 15 5C12.5 9.7 4 9.7 1.5 5Z" fill="#e8e8e8"/><circle cx="8.3" cy="5" r="3.1" fill="#3e3e3e"/><circle cx="8.3" cy="5" r="1.2" fill="#8a8a8a"/></svg>
<div class="t" style="left:991px;top:421px;color:#f0f0f0"><i class="c">背</i><i class="c">景</i></div>

<svg style="left:0;top:0" width="1163" height="774"><rect x="955.8" y="752.8" width="7" height="6.5" rx="3.2" fill="none" stroke="#a8a8a8" stroke-width="1.3"/><rect x="962" y="752.8" width="7" height="6.5" rx="3.2" fill="none" stroke="#a8a8a8" stroke-width="1.3"/><rect x="959" y="755.4" width="7" height="1.3" fill="#a8a8a8"/><text x="984" y="761.5" font-family="Liberation Serif" font-style="italic" font-size="14" fill="#e0e0e0">fx</text><path d="M995.5 762L999 762L997.2 764.5Z" fill="#e0e0e0"/><rect x="1009.5" y="751" width="13.5" height="10" fill="#e0e0e0"/><circle cx="1016.2" cy="756" r="3" fill="#444"/><circle cx="1044.7" cy="755.8" r="5.3" fill="none" stroke="#e0e0e0" stroke-width="1.4"/><path d="M1048.4 752.1A5.3 5.3 0 0 1 1041 759.5Z" fill="#e0e0e0"/><path d="M1048.5 762.5L1052 762.5L1050.2 765Z" fill="#e0e0e0"/><path d="M1064.5 752L1069 752L1070 753.3L1077.3 753.3L1077.3 761L1064.5 761Z" fill="#e0e0e0"/><path d="M1067 756.5H1075" stroke="#9a9a9a" stroke-width="0.8"/><path d="M1093.5 752.5H1103V761.5H1097L1093.5 758Z" fill="none" stroke="#e0e0e0" stroke-width="1.3"/><rect x="1095.5" y="754.5" width="6" height="5" fill="#3a3a3a"/><path d="M1093.5 758L1097 758L1097 761.5Z" fill="#e0e0e0"/><g fill="none" stroke="#e0e0e0" stroke-width="1.3"><path d="M1118.5 753.5H1129.8M1122 753.5V751.5H1126.3V753.5"/><path d="M1119.8 754V763H1128.5V754"/><path d="M1122.4 756V761M1124.2 756V761M1126 756V761"/></g><rect x="889" y="746" width="6" height="1" fill="#6a6a6a"/><rect x="928" y="746" width="8" height="1" fill="#6a6a6a"/></svg>
<!-- layers red box -->


<svg style="left:0;top:0" width="1163" height="774"><defs><pattern id="chk" x="950" y="207" width="7.5" height="7.5" patternUnits="userSpaceOnUse"><rect width="7.5" height="7.5" fill="#ffffff"/><rect width="3.75" height="3.75" fill="#cdcdcd"/><rect x="3.75" y="3.75" width="3.75" height="3.75" fill="#cdcdcd"/></pattern></defs><rect x="948" y="205" width="34" height="34" fill="#333"/><g transform="translate(0,0)"><rect x="950" y="207" width="30" height="30" fill="url(#chk)"/></g><ellipse cx="962" cy="216" rx="3" ry="3.3" fill="#1a8fd0"/><rect x="966" y="224" width="16" height="15" fill="#3c3c3c"/><rect x="970" y="228" width="9" height="9" rx="1.5" fill="none" stroke="#e8e8e8" stroke-width="1"/><g fill="#3c3c3c" stroke="#e8e8e8" stroke-width="0.9"><circle cx="970" cy="228" r="1.3"/><circle cx="979" cy="228" r="1.3"/><circle cx="970" cy="237" r="1.3"/><circle cx="979" cy="237" r="1.3"/></g><rect x="948" y="246" width="34" height="34" fill="#333"/><g transform="translate(0,41)"><rect x="950" y="207" width="30" height="30" fill="url(#chk)"/></g><path d="M955 266Q954 254 965 251" fill="none" stroke="#eef6f6" stroke-width="2"/><rect x="966" y="265" width="16" height="15" fill="#3c3c3c"/><rect x="970" y="269" width="9" height="9" rx="1.5" fill="none" stroke="#e8e8e8" stroke-width="1"/><g fill="#3c3c3c" stroke="#e8e8e8" stroke-width="0.9"><circle cx="970" cy="269" r="1.3"/><circle cx="979" cy="269" r="1.3"/><circle cx="970" cy="278" r="1.3"/><circle cx="979" cy="278" r="1.3"/></g><rect x="948" y="287" width="34" height="34" fill="#333"/><g transform="translate(0,82)"><rect x="950" y="207" width="30" height="30" fill="url(#chk)"/></g><path d="M955 307Q954 295 965 292" fill="none" stroke="#eef6f6" stroke-width="2"/><rect x="966" y="306" width="16" height="15" fill="#3c3c3c"/><rect x="970" y="310" width="9" height="9" rx="1.5" fill="none" stroke="#e8e8e8" stroke-width="1"/><g fill="#3c3c3c" stroke="#e8e8e8" stroke-width="0.9"><circle cx="970" cy="310" r="1.3"/><circle cx="979" cy="310" r="1.3"/><circle cx="970" cy="319" r="1.3"/><circle cx="979" cy="319" r="1.3"/></g><rect x="948" y="328" width="34" height="34" fill="#333"/><g transform="translate(0,123)"><rect x="950" y="207" width="30" height="30" fill="url(#chk)"/></g><path d="M955 348Q954 336 965 333" fill="none" stroke="#eef6f6" stroke-width="2"/><rect x="966" y="347" width="16" height="15" fill="#3c3c3c"/><rect x="970" y="351" width="9" height="9" rx="1.5" fill="none" stroke="#e8e8e8" stroke-width="1"/><g fill="#3c3c3c" stroke="#e8e8e8" stroke-width="0.9"><circle cx="970" cy="351" r="1.3"/><circle cx="979" cy="351" r="1.3"/><circle cx="970" cy="360" r="1.3"/><circle cx="979" cy="360" r="1.3"/></g><rect x="948" y="369" width="34" height="34" fill="#333"/><g transform="translate(0,164)"><rect x="950" y="207" width="30" height="30" fill="url(#chk)"/></g><path d="M955 389Q954 377 965 374" fill="none" stroke="#eef6f6" stroke-width="2"/><rect x="966" y="388" width="16" height="15" fill="#3c3c3c"/><rect x="970" y="392" width="9" height="9" rx="1.5" fill="none" stroke="#e8e8e8" stroke-width="1"/><g fill="#3c3c3c" stroke="#e8e8e8" stroke-width="0.9"><circle cx="970" cy="392" r="1.3"/><circle cx="979" cy="392" r="1.3"/><circle cx="970" cy="401" r="1.3"/><circle cx="979" cy="401" r="1.3"/></g><g fill="none" stroke="#f4f4f4" stroke-width="1.2"><path d="M947.5 216L947.5 204.5L959 204.5M971 204.5L982.5 204.5L982.5 216M982.5 228L982.5 239.5L971 239.5M959 239.5L947.5 239.5L947.5 228"/></g><rect x="949" y="412" width="32" height="31" fill="#3a3a3a"/><rect x="950" y="413" width="30" height="29" fill="#dff6e2"/><rect x="1115.5" y="427.5" width="11" height="7" fill="none" stroke="#d8d8d8" stroke-width="1.2"/><path d="M1118 427.5L1118 425Q1121 420 1124 425L1124 427.5" fill="none" stroke="#d8d8d8" stroke-width="1.2"/><rect x="1120.3" y="430" width="1.4" height="2" fill="#d8d8d8"/></svg>
<div class="a" style="left:909px;top:168px;width:196px;height:242px;border:3px solid #c8121a"></div>
<div class="a" style="left:21px;top:755px;width:47px;height:47px;border-radius:50%;background:#f7f8fc"></div>
</body></html>
